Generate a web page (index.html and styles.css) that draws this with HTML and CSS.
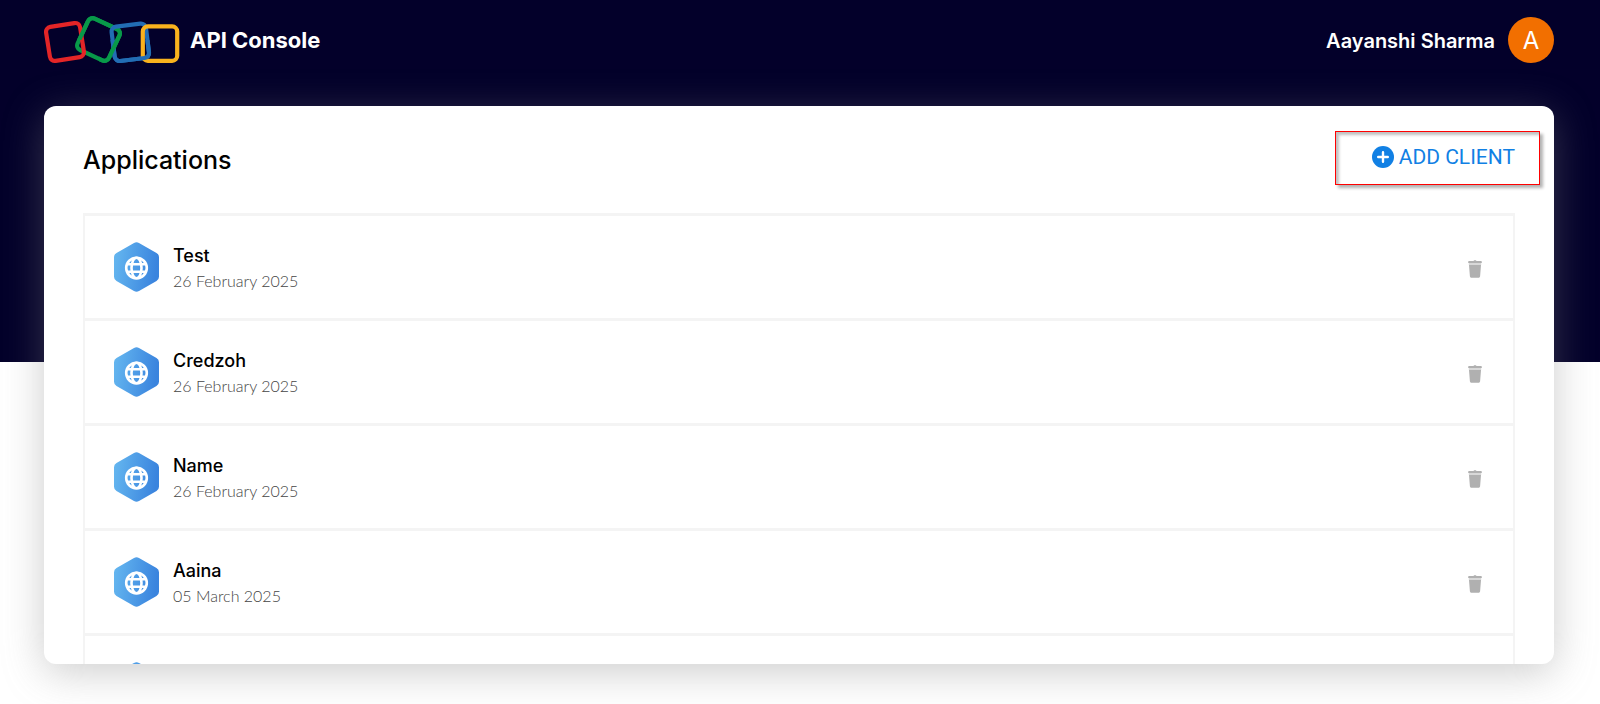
FILE: index.html
```
<!DOCTYPE html>
<html lang="en">
<head>
<meta charset="utf-8">
<meta name="viewport" content="width=device-width, initial-scale=1">
<title>API Console</title>
<link rel="stylesheet" href="styles.css">
</head>
<body>
<svg class="defs" width="0" height="0" aria-hidden="true">
  <defs>
    <linearGradient id="hex-fill" x1="0" y1="0" x2="1" y2="0.15">
      <stop offset="0" stop-color="#66b8f0"/>
      <stop offset="1" stop-color="#3a84de"/>
    </linearGradient>
    <symbol id="app" viewBox="0 0 46 50">
      <path fill="url(#hex-fill)" d="M20 .9a5 5 0 0 1 5 0L42.500 10.900a5 5 0 0 1 2.500 4.300v19.600a5 5 0 0 1-2.500 4.300L25 49.100a5 5 0 0 1-5 0L2.500 39.100a5 5 0 0 1-2.500-4.300V15.200A5 5 0 0 1 2.500 10.900z"/>
      <g fill="none" stroke="#fff" stroke-width="2.600">
        <circle cx="22.500" cy="26" r="10.300"/>
        <ellipse cx="22.500" cy="26" rx="5" ry="10.300"/>
        <path d="M13 22.200h19M13 29.800h19"/>
      </g>
    </symbol>
    <symbol id="trash" viewBox="0 0 14 18">
      <path fill="#b0b0b0" d="M4.500 1h1l.6-.8h1.800l.6.800H13c.5 0 .8.300.8.700V3H.2V1.700C.2 1.300.5 1 1 1zM1 5h12l-.9 11.200c-.1.900-.7 1.500-1.600 1.500h-7c-.9 0-1.500-.6-1.600-1.500z"/>
      <path fill="#d8d8d8" d="M.8 3h12.400v2H.8z"/>
    </symbol>
    <clipPath id="upper"><path d="M0 0h136v24H0z"/></clipPath>
    <clipPath id="lower"><path d="M0 24h136v24H0z"/></clipPath>
    <clipPath id="lower-right"><path d="M55 24h81v24H55z"/></clipPath>
    <rect id="green" x="37.200" y="6.200" width="34.600" height="34.600" rx="5" transform="rotate(25 54.500 23.500)" stroke="#089949"/>
    <rect id="blue" x="69" y="9" width="34.600" height="34.600" rx="5" transform="rotate(-7 86.300 26.300)" stroke="#226db4"/>
  </defs>
</svg>

<header class="topbar">
  <div class="brand">
    <svg class="logo" viewBox="0 0 136 48" aria-hidden="true">
      <g fill="none" stroke-width="4.200">
        <use href="#green"/>
        <rect x="3.800" y="8.800" width="34.400" height="34.400" rx="5" transform="rotate(-9 21 26)" stroke="#e42527"/>
        <g clip-path="url(#upper)"><use href="#green"/></g>
        <use href="#blue"/>
        <rect x="98.800" y="10.400" width="34.400" height="34.400" rx="5" stroke="#f9b21d"/>
        <g clip-path="url(#lower)"><use href="#blue"/></g>
        <g clip-path="url(#lower-right)"><use href="#green"/></g>
      </g>
    </svg>
    <h1 class="product">API Console</h1>
  </div>
  <div class="account">
    <span class="user">Aayanshi Sharma</span>
    <span class="avatar">A</span>
  </div>
</header>

<main class="card">
  <div class="card-head">
    <h2 class="title">Applications</h2>
    <button class="add" type="button">
      <svg class="plus" viewBox="0 0 22 22" aria-hidden="true"><circle cx="11" cy="11" r="11" fill="#1180e4"/><path d="M11 6.200v9.600M6.200 11h9.600" stroke="#fff" stroke-width="2.400" stroke-linecap="round"/></svg>
      ADD CLIENT
    </button>
  </div>
  <ul class="list">
    <li class="row"><svg class="app-icon" aria-hidden="true"><use href="#app"/></svg><div class="info"><span class="name">Test</span><span class="date">26 February 2025</span></div><button class="delete" type="button" aria-label="Delete Test"><svg class="trash"><use href="#trash"/></svg></button></li>
    <li class="row"><svg class="app-icon" aria-hidden="true"><use href="#app"/></svg><div class="info"><span class="name">Credzoh</span><span class="date">26 February 2025</span></div><button class="delete" type="button" aria-label="Delete Credzoh"><svg class="trash"><use href="#trash"/></svg></button></li>
    <li class="row"><svg class="app-icon" aria-hidden="true"><use href="#app"/></svg><div class="info"><span class="name">Name</span><span class="date">26 February 2025</span></div><button class="delete" type="button" aria-label="Delete Name"><svg class="trash"><use href="#trash"/></svg></button></li>
    <li class="row"><svg class="app-icon" aria-hidden="true"><use href="#app"/></svg><div class="info"><span class="name">Aaina</span><span class="date">05 March 2025</span></div><button class="delete" type="button" aria-label="Delete Aaina"><svg class="trash"><use href="#trash"/></svg></button></li>
    <li class="row"><svg class="app-icon" aria-hidden="true"><use href="#app"/></svg></li>
  </ul>
</main>
</body>
</html>
```
FILE: styles.css
```
* { box-sizing: border-box; }

body {
  margin: 0;
  height: 100vh;
  display: flex;
  flex-direction: column;
  overflow: hidden;
  font-family: Inter, "Liberation Sans", sans-serif;
  color: #000;
  background: linear-gradient(#03002a, #03002a) top / 100% 362px no-repeat #fff;
}

.defs { display: block; position: absolute; }

.topbar {
  display: flex;
  align-items: center;
  justify-content: space-between;
  height: 80px;
  margin: 0 46px 26px 44px;
  flex: none;
}

.brand, .account { display: flex; align-items: center; color: #fff; }
.brand { gap: 10px; }
.account { gap: 13px; }
.logo { width: 136px; height: 48px; }
.product { margin: 0; font-size: 22px; line-height: 28px; font-weight: 700; }
.user { padding-top: 2px; font-size: 20px; line-height: 28px; font-weight: 600; }

.avatar {
  width: 46px;
  height: 46px;
  border-radius: 50%;
  background: #f26f00;
  font-size: 24px;
  line-height: 48px;
  text-align: center;
}

.card {
  flex: 1;
  min-height: 0;
  margin: 0 46px 40px 44px;
  padding: 0 39px;
  border-radius: 12px;
  overflow: hidden;
  background: #fff;
  box-shadow: 0 8px 40px rgba(130, 130, 130, 0.4);
}

.card-head {
  display: flex;
  align-items: flex-start;
  justify-content: space-between;
  height: 107px;
  padding-top: 25px;
}

.title { margin: 0; padding-top: 12px; font-size: 25px; line-height: 34px; font-weight: 500; }

.add {
  display: flex;
  align-items: center;
  gap: 5px;
  height: 54px;
  margin-right: -25px;
  padding: 0 24px 2px 36px;
  border: 1px solid #f00;
  background: none;
  box-shadow: 3px 3px 3px rgba(0, 0, 0, 0.3), inset 3px 3px 3px rgba(0, 0, 0, 0.25);
  color: #1180e4;
  font: 400 21px Roboto, sans-serif;
}
.plus { width: 22px; height: 22px; }

.list { margin: 0; padding: 0; list-style: none; border: 2px solid #f4f4f4; border-top-width: 3px; }

.row {
  display: flex;
  align-items: center;
  height: 105px;
  padding: 0 31px 0 29px;
  border-bottom: 3px solid #f4f4f4;
}
.app-icon { width: 46px; height: 50px; }
.info { flex: 1; margin-left: 13px; padding-top: 2px; display: flex; flex-direction: column; }
.name { font-size: 18px; line-height: 25px; font-weight: 500; }
.date { font-family: Lato, sans-serif; font-size: 16px; line-height: 25px; font-weight: 300; color: #444; }
.delete { display: flex; padding: 3px 0 0; border: 0; background: none; }
.trash { width: 14px; height: 18px; }
```
